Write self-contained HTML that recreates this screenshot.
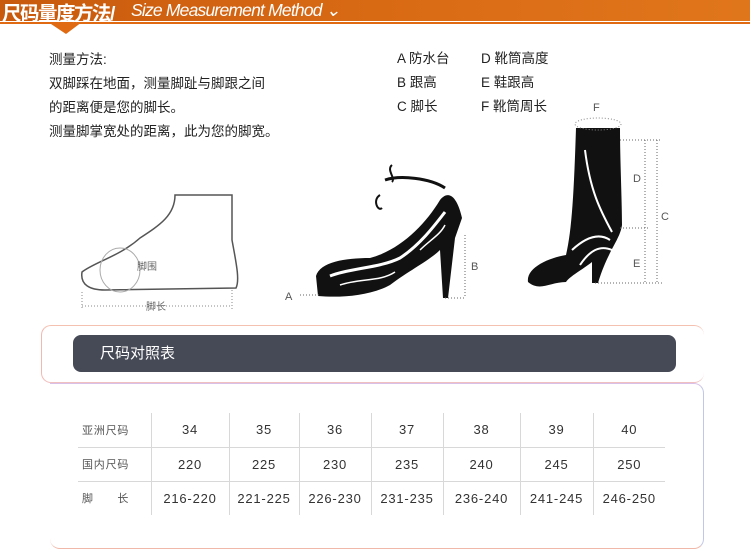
<!DOCTYPE html>
<html><head><meta charset="utf-8"><style>
*{margin:0;padding:0;box-sizing:border-box}
body{width:750px;height:552px;background:#fff;position:relative;overflow:hidden;font-family:"Liberation Sans","Noto Sans CJK SC",sans-serif;color:#222}
.hdr{position:absolute;left:0;top:0;width:750px;height:21px;background:linear-gradient(90deg,#c85a0e,#d96a14 50%,#e0761c)}
.hline{position:absolute;left:0;top:22px;width:750px;height:2px;background:#e06a12}
.t{position:absolute;white-space:nowrap}
.p{position:absolute;border:1px solid #e8b8c8;border-radius:10px}
.bar{position:absolute;left:73px;top:335px;width:603px;height:37px;background:#464a56;border-radius:8px;color:#fff;font-size:15px;line-height:37px;padding-left:27px}
table{position:absolute;left:78px;top:413px;border-collapse:collapse;font-size:13px;color:#333;letter-spacing:0.8px}
td{height:34px;text-align:center;border-left:1px solid #d8d8d8;border-top:1px solid #d8d8d8}
tr:first-child td{border-top:none}
td:first-child{border-left:none;text-align:left;padding-left:4px;font-size:11px;color:#555}
</style></head><body>
<div class="hdr"></div><div class="hline"></div>
<svg style="position:absolute;left:0;top:0" width="750" height="40"><polygon points="48,22 82,22 66,34" fill="#e06a12"/></svg>
<div class="t" style="left:2px;top:-3px;color:#fff;font-size:19.5px;font-weight:bold;letter-spacing:-1.5px">尺码量度方法/</div>
<div class="t" style="left:131px;top:0px;color:#fff;font-size:17.5px;font-style:italic;letter-spacing:-0.8px">Size Measurement Method ⌄</div>

<div class="t" style="left:49px;top:48px;font-size:13.5px;line-height:24px">测量方法:<br>双脚踩在地面，测量脚趾与脚跟之间<br>的距离便是您的脚长。<br>测量脚掌宽处的距离，此为您的脚宽。</div>
<div class="t" style="left:397px;top:47px;font-size:13.5px;line-height:24px">A 防水台<br>B 跟高<br>C 脚长</div>
<div class="t" style="left:481px;top:47px;font-size:13.5px;line-height:24px">D 靴筒高度<br>E 鞋跟高<br>F 靴筒周长</div>

<svg style="position:absolute;left:0;top:100px" width="750" height="220" viewBox="0 100 750 220">
<path d="M175,195 L232,195 L232,240 C236,262 240,280 236,288 L105,290 C90,290 80,285 82,272 C95,262 120,256 140,238 C160,225 175,215 175,195 Z" fill="none" stroke="#555" stroke-width="1.5"/>
<ellipse cx="120" cy="270" rx="20" ry="22" fill="none" stroke="#aaa"/>
<line x1="82" y1="306" x2="232" y2="306" stroke="#888" stroke-dasharray="1,2"/>
<line x1="82" y1="292" x2="82" y2="310" stroke="#888" stroke-dasharray="1,2"/>
<line x1="232" y1="290" x2="232" y2="310" stroke="#888" stroke-dasharray="1,2"/>
<text x="137" y="270" font-size="10" fill="#666">脚围</text>
<text x="146" y="310" font-size="10" fill="#666">脚长</text>
<path d="M316,276 C320,262 345,258 370,258 C400,250 425,225 440,200 C450,188 458,200 462,218 L455,238 L448,298 L443,298 L440,250 C430,260 410,270 390,285 C370,296 340,298 318,296 Z" fill="#111"/>
<path d="M330,276 C350,268 380,268 400,258 C420,245 435,225 445,212" fill="none" stroke="#fff" stroke-width="3"/>
<path d="M340,285 C360,278 380,282 395,272 M420,250 C430,240 440,235 445,225" fill="none" stroke="#fff" stroke-width="1.5"/>
<path d="M385,180 C400,175 430,178 445,188" fill="none" stroke="#111" stroke-width="3"/>
<path d="M392,165 C386,170 396,178 392,182 M380,195 C372,200 378,212 382,208" fill="none" stroke="#111" stroke-width="2"/>
<line x1="465" y1="235" x2="465" y2="298" stroke="#666" stroke-dasharray="1,2"/>
<line x1="445" y1="298" x2="465" y2="298" stroke="#666" stroke-dasharray="1,2"/>
<line x1="300" y1="295" x2="320" y2="295" stroke="#666" stroke-dasharray="1,2"/>
<text x="471" y="270" font-size="11" fill="#555">B</text>
<text x="285" y="300" font-size="11" fill="#555">A</text>
<path d="M576,128 L620,128 C620,160 622,200 622,225 C620,240 608,250 598,283 L592,283 L592,262 C582,270 570,276 566,282 C550,282 540,292 528,282 C526,268 548,258 566,255 C572,230 574,190 576,128 Z" fill="#111"/>
<path d="M585,150 C590,190 600,210 612,232 M572,250 C585,238 598,232 610,240 M580,265 C590,250 600,245 612,250" fill="none" stroke="#fff" stroke-width="2"/>
<ellipse cx="598" cy="124" rx="23" ry="6" fill="none" stroke="#888" stroke-dasharray="1,2"/>
<text x="593" y="111" font-size="11" fill="#555">F</text>
<line x1="645" y1="140" x2="645" y2="283" stroke="#666" stroke-dasharray="1,2"/>
<line x1="657" y1="140" x2="657" y2="283" stroke="#666" stroke-dasharray="1,2"/>
<line x1="620" y1="140" x2="662" y2="140" stroke="#666" stroke-dasharray="1,2"/>
<line x1="620" y1="228" x2="650" y2="228" stroke="#666" stroke-dasharray="1,2"/>
<line x1="595" y1="283" x2="662" y2="283" stroke="#666" stroke-dasharray="1,2"/>
<text x="633" y="182" font-size="11" fill="#555">D</text>
<text x="661" y="220" font-size="11" fill="#555">C</text>
<text x="633" y="267" font-size="11" fill="#555">E</text>
</svg>

<div class="p" style="left:41px;top:325px;width:663px;height:58px;border-color:#f4c0b0 #c8c8e8 #f0c0c0 #f4b8b0;border-right:none"></div>
<div class="p" style="left:50px;top:383px;width:654px;height:166px;border-color:#d8c0e8 #c0c8e8 #f0b8a8 transparent;border-left:none;border-top-left-radius:0"></div>
<div class="bar">尺码对照表</div>
<table>
<tr><td style="width:73px">亚洲尺码</td><td style="width:78px">34</td><td style="width:70px">35</td><td style="width:72px">36</td><td style="width:72px">37</td><td style="width:77px">38</td><td style="width:73px">39</td><td style="width:72px">40</td></tr>
<tr><td>国内尺码</td><td>220</td><td>225</td><td>230</td><td>235</td><td>240</td><td>245</td><td>250</td></tr>
<tr><td>脚&emsp;&emsp;长</td><td>216-220</td><td>221-225</td><td>226-230</td><td>231-235</td><td>236-240</td><td>241-245</td><td>246-250</td></tr>
</table>
</body></html>
